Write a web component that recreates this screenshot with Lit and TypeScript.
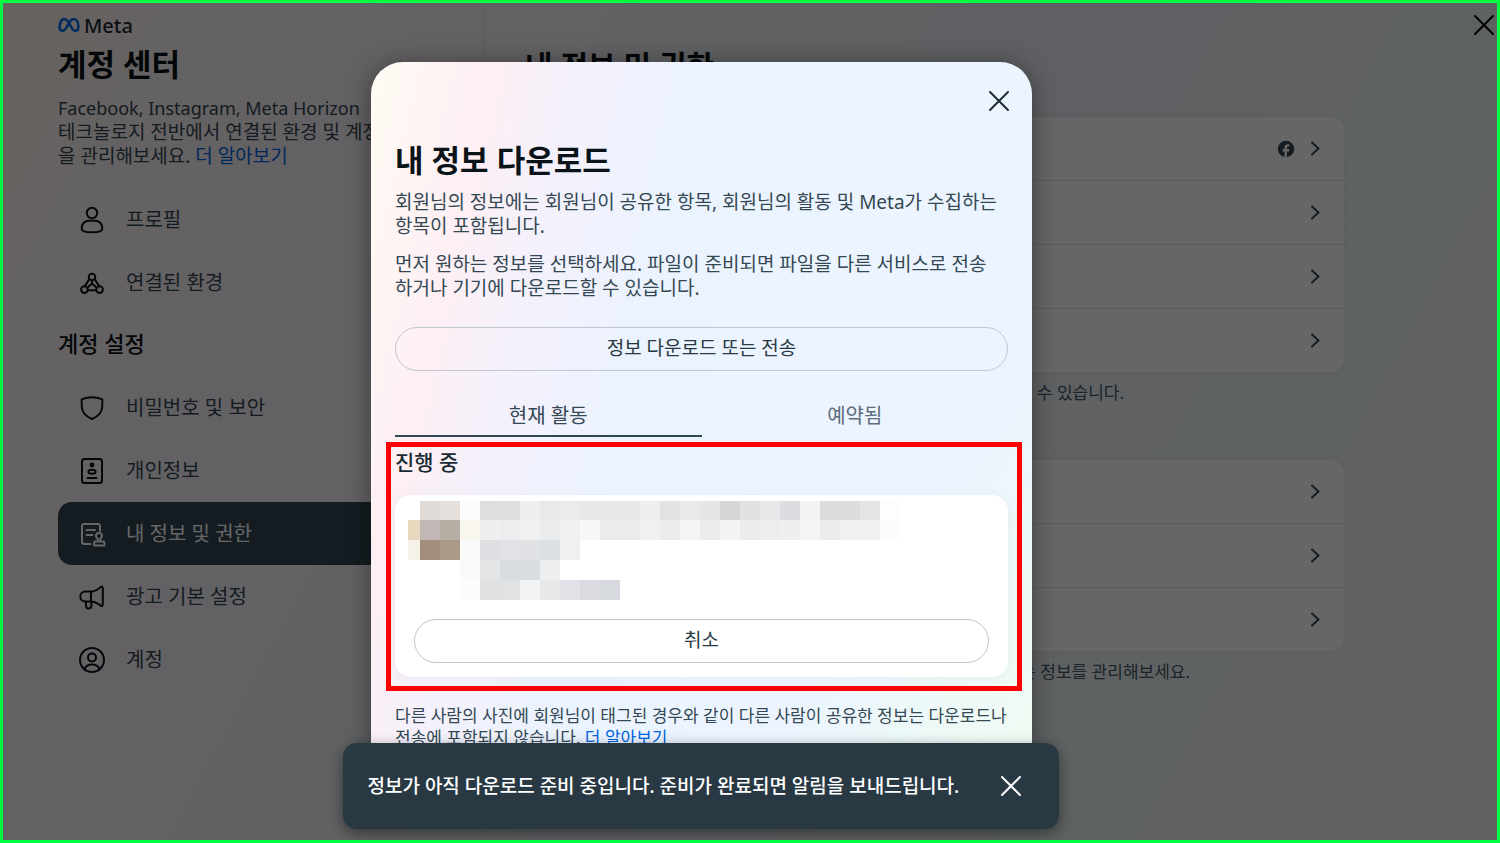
import { LitElement, html, css, svg } from "lit";
import { customElement } from "lit/decorators.js";
import { classMap } from "lit/directives/class-map.js";

const icons = {
  person: svg`<circle cx="14" cy="7" r="5.2"/><path d="M3.800 21.800c0-4.200 3.200-7 7-7h6.400c3.800 0 7 2.800 7 7v1.200c0 2.400-2.600 3.300-10.200 3.300s-10.200-.9-10.200-3.300z"/>`,
  linked: svg`<circle cx="14" cy="8" r="3.300"/><circle cx="6.400" cy="20.600" r="3.300"/><circle cx="21.600" cy="20.600" r="3.300"/><path d="M11.200 10.200L7 17M16.800 10.200L21 17M10 21.200h8M14 11.400v3l-4.400 4M14 14.400l4.400 4"/>`,
  shield: svg`<path d="M3.700 5.400C7 3.900 10.400 3.200 14 3.200s7 .7 10.300 2.200v6.600c0 6-4.200 10.600-10.300 13-6.100-2.400-10.300-7-10.300-13z"/>`,
  card: svg`<rect x="4" y="2" width="20" height="24" rx="2.500"/><circle cx="14" cy="8" r="1.400" fill="currentColor"/><ellipse cx="14" cy="14.800" rx="3.600" ry="2"/><path d="M9.500 21h9"/>`,
  permission: svg`<path d="M12.500 24H6.200C5 24 4 23 4 21.800V6.200C4 5 5 4 6.200 4h13.600C21 4 22 5 22 6.200V11M8.500 10h8.500M8.500 15h6"/><path d="M19.800 20.500v-1.600c-1.200-.8-1.800-1.700-1.800-2.900a3 3 0 0 1 6 0c0 1.200-.6 2.100-1.800 2.900v1.600M17.500 21.500h7.500c.8 0 1.400.6 1.400 1.400v2.600H16.100v-2.600c0-.8.6-1.400 1.400-1.400z"/>`,
  horn: svg`<path d="M12.600 8.600H7.200a4.500 4.500 0 0 0 0 9.800h5.400c4 0 7.400 2 10.200 4.200.9.700 2 .2 2-1V5c0-1.400-1.100-1.900-2-1.100-2.800 2.700-6.200 4.700-10.200 4.700zM13 8.600v9.800M8 18.600v4.200a2.700 2.700 0 0 0 5.400 0v-4.200"/>`,
  account: svg`<circle cx="14" cy="14" r="12"/><circle cx="14" cy="11.400" r="4"/><path d="M6.400 23c1.400-2.900 4.200-4.400 7.600-4.400s6.200 1.500 7.600 4.400"/>`,
};

type IconName = keyof typeof icons;

interface NavItem {
  icon: IconName;
  label: string;
  active?: boolean;
}

const mainNav: NavItem[] = [
  { icon: "person", label: "프로필" },
  { icon: "linked", label: "연결된 환경" },
];

const settingsNav: NavItem[] = [
  { icon: "shield", label: "비밀번호 및 보안" },
  { icon: "card", label: "개인정보" },
  { icon: "permission", label: "내 정보 및 권한", active: true },
  { icon: "horn", label: "광고 기본 설정" },
  { icon: "account", label: "계정" },
];

/* Pixelated preview: x of the first cell, then one colour per 20px cell. */
const mosaic: { x: number; cells: string[] }[] = [
  { x: 20, cells: "dfdad5 e5e0dc fcfcfc dcdee0 dddfe0 eeefef e8eae8 e9ebec e6e8e8 e5e8e5 e6e8ea eceef0 e0e3e1 e9eaec e5e6e8 d3d5d6 e0e2e1 e6e8ea dcdde0 f3f3f3 dbdddf dcdedd e4e6e4 fdfdfd".split(" ") },
  { x: 0, cells: "e8d8bd c1b8b6 b7aea5 f9f5ef efefef ecedee f0f0f0 e9ebed f0f0f0 f8f8f8 e9ebed e9ebec f0f0f1 eaecee f5f5f5 ececec f3f3f3 ececed ebedef efeff0 f5f5f5 eaecee f0f1f1 f0f0f0 fcfcfc".split(" ") },
  { x: 0, cells: "f6f2ea a38e7b aa9a86 fafafa dddfe3 e1e2e6 dfe1e4 dae0e3 eff0f2".split(" ") },
  { x: 60, cells: "f8f9f9 e5e6e8 d9dde0 dbdee1 edeef0".split(" ") },
  { x: 60, cells: "fcfcfc dfe1e2 e0e2e4 f2f3f5 e7e8ea e1e2e7 dadbe0 d6dade".split(" ") },
];

const closeIcon = html`<svg class="cross" viewBox="0 0 24 24" aria-hidden="true"><path d="M3 3l18 18M21 3L3 21"/></svg>`;

@customElement("app-root")
export class AppRoot extends LitElement {
  static styles = css`
    :host {
      display: block;
      font-family: "Noto Sans", "Noto Sans CJK KR", sans-serif;
      color: #1c2b33;
    }
    * { box-sizing: border-box; }
    h1, h2, h3, p, ul { margin: 0; padding: 0; font-weight: inherit; }
    ul { list-style: none; }
    button { font: inherit; color: inherit; background: none; border: 0; padding: 0; cursor: pointer; }
    a { color: inherit; text-decoration: none; }
    .frame {
      position: relative;
      height: 100vh;
      overflow: hidden;
      border: 3px solid #00ff40;
    }
    .page {
      height: 100%;
      display: grid;
      grid-template-columns: minmax(360px, 482px) 1fr;
      background: linear-gradient(118deg, #fff6ee 0%, #faf4f6 12%, #f7f3f8 24%, #eff3f7 42%, #ecf0f7 58%, #eef4f5 76%, #eff6ee 100%);
    }
    .side { padding: 11px 24px 0 55px; border-right: 1px solid #e2e6ea; }
    .brand { display: flex; align-items: center; gap: 4px; height: 22px; font-size: 20px; font-weight: 500; }
    .brand svg { width: 22px; height: 16px; }
    .title { font-size: 30px; line-height: 40px; font-weight: 700; color: #0a1317; }
    .side .title, .modal .title { font-size: 31px; }
    .side .title { margin-top: 8px; }
    .intro { margin: 12px 0 20px; font-size: 19px; line-height: 24px; color: #344854; white-space: nowrap; }
    .intro .products { display: block; font-size: 18px; }
    .intro a, .note a { color: #0064e0; }
    .nav-item {
      display: flex; align-items: center; gap: 20px;
      height: 63px; padding-left: 20px; border-radius: 14px;
      font-size: 20px; color: #344854;
    }
    .nav-item span { padding-bottom: 3px; }
    .nav-item svg { width: 28px; height: 28px; color: #0a1317; }
    .nav-item.active { background: #344854; color: #fff; }
    .nav-item.active svg { color: #fff; }
    .icon { fill: none; stroke: currentColor; stroke-width: 2; stroke-linecap: round; stroke-linejoin: round; }
    .nav-title { padding-bottom: 6px; height: 62px; display: flex; align-items: center; font-size: 22px; font-weight: 500; color: #0a1317; }
    .main { padding: 43px 153px 0 40px; }
    .list { background: #fff; border-radius: 14px; box-shadow: 0 0 12px rgba(52, 72, 84, 0.06); }
    .main .title + .list { margin-top: 31px; }
    .list li + li { border-top: 1px solid #dee3e9; }
    .row { display: flex; align-items: center; justify-content: flex-end; gap: 11px; height: 63px; padding-right: 20px; }
    .row .chevron { width: 18px; height: 18px; color: #344854; }
    .row .fb { width: 18px; height: 18px; }
    .caption { margin-top: 9px; font-size: 17px; line-height: 24px; color: #465a69; text-align: right; padding-right: 220px; }
    .caption.short { padding-right: 154px; }
    .caption + .list { margin-top: 55px; }
    .scrim {
      position: absolute; inset: 0;
      background: rgba(0, 0, 0, 0.6);
      display: flex; justify-content: center; align-items: flex-start;
      padding: 59px 97px 0 0;
    }
    .page-close { position: absolute; top: 10px; right: 1px; display: flex; color: #000; }
    .cross { width: 24px; height: 24px; fill: none; stroke: currentColor; stroke-width: 2; stroke-linecap: round; }
    .modal {
      width: 661px; max-width: 100%;
      padding: 27px 24px 48px;
      border-radius: 32px;
      background:
        linear-gradient(124deg, rgba(240, 251, 241, 0) 74%, rgba(238, 250, 246, 0.9) 88%, #f0fbf1 100%),
        linear-gradient(103deg, #fffbf3 0%, #fdeff4 15%, #f4f1fc 25%, #ebf3fe 40%, #ecf5ff 66%, #eaf3fe 100%);
      box-shadow: 0 2px 24px rgba(0, 0, 0, 0.4);
      display: flex; flex-direction: column;
    }
    .modal-close { align-self: flex-end; display: flex; margin-right: -3px; }
    .modal .title { margin: 27px 0 10px; }
    .text { font-size: 19px; line-height: 24px; color: #344854; }
    .text + .text { margin-top: 14px; }
    .pill {
      height: 44px; width: 100%; padding-bottom: 4px;
      border: 1px solid #c0c8d1; border-radius: 22px;
      font-size: 19px; color: #283943;
    }
    .text + .pill { margin-top: 27px; }
    .tabs { display: grid; grid-template-columns: 1fr 1fr; margin-top: 23px; }
    .tab { height: 43px; font-size: 20px; color: #5d6c7b; border-bottom: 2px solid transparent; }
    .tab.current { color: #344854; border-color: #344854; }
    .progress { position: relative; }
    .progress::after {
      content: ""; position: absolute; inset: 5px -14px -14px -9px;
      border: 5px solid #ff0000; pointer-events: none;
    }
    .progress-title { padding-top: 2px; font-size: 21px; line-height: 46px; font-weight: 500; color: #1c2b33; }
    .request {
      margin-top: 10px; padding: 6px 19px 14px 13px;
      border-radius: 16px; background: #fff;
      box-shadow: 0 2px 14px rgba(52, 72, 84, 0.05);
    }
    .mosaic { display: block; width: 500px; max-width: 100%; height: 99px; }
    .request .pill { margin: 19px 0 0 6px; width: calc(100% - 6px); }
    .note { margin-top: 28px; font-size: 17px; line-height: 22px; color: #344854; }
    .toast-area { position: absolute; left: 0; right: 99px; bottom: 11px; display: flex; justify-content: center; }
    .toast {
      width: 716px; height: 86px; padding: 0 36px 0 25px;
      display: flex; align-items: center; justify-content: space-between;
      border-radius: 14px; background: #283943; color: #fff;
      font-size: 19px; font-weight: 500;
      box-shadow: 0 4px 14px rgba(0, 0, 0, 0.45);
    }
    .toast span { padding-bottom: 2px; }
    .toast button { display: flex; }
  `;

  private navItem(item: NavItem) {
    return html`<li>
      <a href="#" class=${classMap({ "nav-item": true, active: !!item.active })}>
        <svg class="icon" viewBox="0 0 28 28" aria-hidden="true">${icons[item.icon]}</svg>
        <span>${item.label}</span>
      </a>
    </li>`;
  }

  private list(count: number, badgeFirst = false) {
    return html`<ul class="list">
      ${Array.from({ length: count }, (_, i) => html`<li>
        <a href="#" class="row" aria-label="설정">
          ${badgeFirst && i === 0
            ? html`<svg class="fb" viewBox="0 0 18 18" aria-hidden="true"><circle cx="9" cy="9" r="8.200" fill="#344854"/><path d="M7.500 17.200v-5.600H5.600V9h1.900V7.800c0-2.500 1.200-3.600 3.300-3.600.7 0 1.200.1 1.600.2v2.200h-1c-1 0-1.400.4-1.400 1.300V9h2.300l-.4 2.600H10v5.600z" fill="#fff"/></svg>`
            : ""}
          <svg class="icon chevron" viewBox="0 0 18 18" aria-hidden="true"><path d="M6 2.500L12.500 8.500 6 14.500"/></svg>
        </a>
      </li>`)}
    </ul>`;
  }

  render() {
    return html`
      <div class="frame">
        <div class="page">
          <aside class="side">
            <div class="brand">
              <svg viewBox="0 0 22 16" aria-hidden="true">
                <path d="M1.600 10.500C1.600 6 3.500 2 6.300 2c2 0 3.300 1.700 5.300 5.200 2.100 3.700 3.200 6.600 5.700 6.600 2 0 3.100-1.600 3.100-4.200C20.400 5.600 18.600 2 15.700 2c-2.400 0-4 2.400-5.600 5.300C8 11.200 6.900 13.800 4.700 13.800c-2 0-3.100-1.200-3.100-3.300z" fill="none" stroke="#0070e8" stroke-width="2.600"/>
              </svg>
              <span>Meta</span>
            </div>
            <h1 class="title">계정 센터</h1>
            <p class="intro"><span class="products">Facebook, Instagram, Meta Horizon</span>테크놀로지 전반에서 연결된 환경 및 계정 설정<br>을 관리해보세요. <a href="#">더 알아보기</a></p>
            <nav>
              <ul>${mainNav.map((n) => this.navItem(n))}</ul>
              <h2 class="nav-title">계정 설정</h2>
              <ul>${settingsNav.map((n) => this.navItem(n))}</ul>
            </nav>
          </aside>
          <main class="main">
            <h1 class="title">내 정보 및 권한</h1>
            ${this.list(4, true)}
            <p class="caption">정보를 관리할 수 있습니다.</p>
            ${this.list(3)}
            <p class="caption short">사용하는 정보를 관리해보세요.</p>
          </main>
        </div>
        <div class="scrim">
          <section class="modal" role="dialog" aria-labelledby="dialog-title">
            <button class="modal-close" aria-label="닫기">${closeIcon}</button>
            <h2 class="title" id="dialog-title">내 정보 다운로드</h2>
            <p class="text">회원님의 정보에는 회원님이 공유한 항목, 회원님의 활동 및 Meta가 수집하는<br>항목이 포함됩니다.</p>
            <p class="text">먼저 원하는 정보를 선택하세요. 파일이 준비되면 파일을 다른 서비스로 전송<br>하거나 기기에 다운로드할 수 있습니다.</p>
            <button class="pill">정보 다운로드 또는 전송</button>
            <div class="tabs" role="tablist">
              <button class="tab current" role="tab" aria-selected="true">현재 활동</button>
              <button class="tab" role="tab" aria-selected="false">예약됨</button>
            </div>
            <div class="progress">
              <h3 class="progress-title">진행 중</h3>
              <div class="request">
                <svg class="mosaic" viewBox="8 1 500 99" shape-rendering="crispEdges" aria-hidden="true">
                  ${mosaic.map((row, r) => row.cells.map((c, i) => svg`<rect x=${row.x + i * 20} y=${r * 20} width="20" height="20" fill=${"#" + c}></rect>`))}
                </svg>
                <button class="pill">취소</button>
              </div>
            </div>
            <p class="note">다른 사람의 사진에 회원님이 태그된 경우와 같이 다른 사람이 공유한 정보는 다운로드나<br>전송에 포함되지 않습니다. <a href="#">더 알아보기</a></p>
          </section>
        </div>
        <button class="page-close" aria-label="닫기">${closeIcon}</button>
        <div class="toast-area">
          <div class="toast" role="status">
            <span>정보가 아직 다운로드 준비 중입니다. 준비가 완료되면 알림을 보내드립니다.</span>
            <button aria-label="알림 닫기">${closeIcon}</button>
          </div>
        </div>
      </div>
    `;
  }
}
